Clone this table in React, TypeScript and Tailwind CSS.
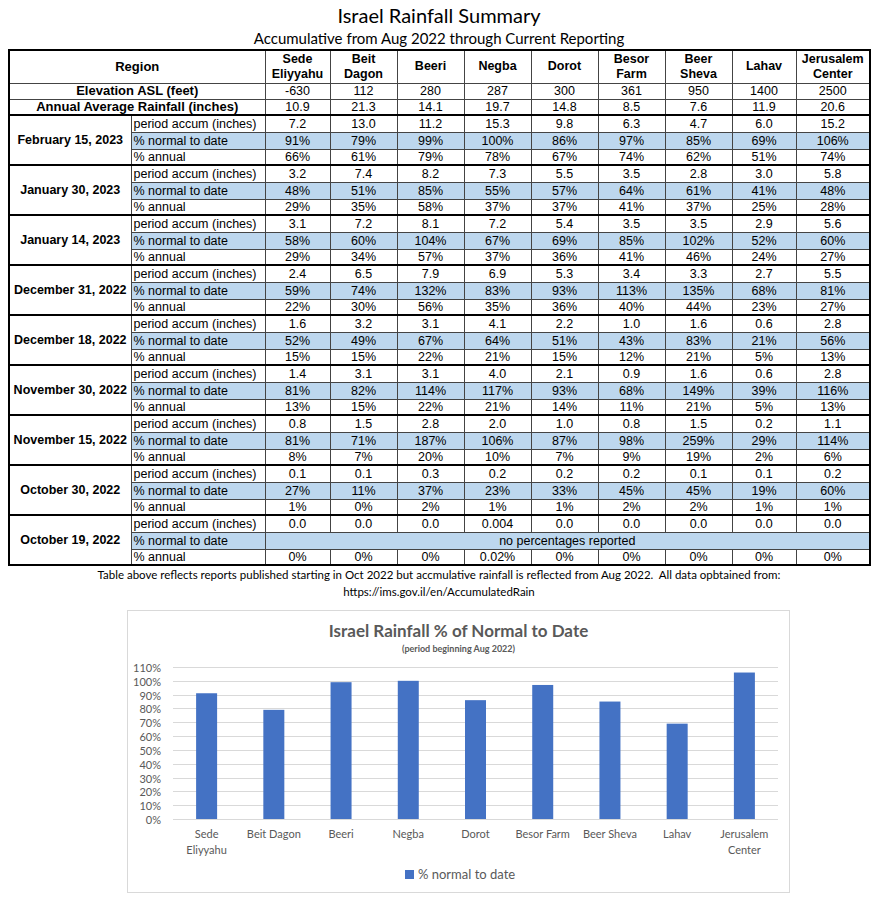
import React from 'react'

const stations = [
  ['Sede', 'Eliyyahu'],
  ['Beit', 'Dagon'],
  ['Beeri'],
  ['Negba'],
  ['Dorot'],
  ['Besor', 'Farm'],
  ['Beer', 'Sheva'],
  ['Lahav'],
  ['Jerusalem', 'Center'],
]

const elevation = ['-630', '112', '280', '287', '300', '361', '950', '1400', '2500']
const annualAvg = ['10.9', '21.3', '14.1', '19.7', '14.8', '8.5', '7.6', '11.9', '20.6']

type Report = {
  date: string
  accum: string[]
  normal: string[] | null
  annual: string[]
}

const pct = (xs: number[]) => xs.map((x) => `${x}%`)

const reports: Report[] = [
  {
    date: 'February 15, 2023',
    accum: ['7.2', '13.0', '11.2', '15.3', '9.8', '6.3', '4.7', '6.0', '15.2'],
    normal: pct([91, 79, 99, 100, 86, 97, 85, 69, 106]),
    annual: pct([66, 61, 79, 78, 67, 74, 62, 51, 74]),
  },
  {
    date: 'January 30, 2023',
    accum: ['3.2', '7.4', '8.2', '7.3', '5.5', '3.5', '2.8', '3.0', '5.8'],
    normal: pct([48, 51, 85, 55, 57, 64, 61, 41, 48]),
    annual: pct([29, 35, 58, 37, 37, 41, 37, 25, 28]),
  },
  {
    date: 'January 14, 2023',
    accum: ['3.1', '7.2', '8.1', '7.2', '5.4', '3.5', '3.5', '2.9', '5.6'],
    normal: pct([58, 60, 104, 67, 69, 85, 102, 52, 60]),
    annual: pct([29, 34, 57, 37, 36, 41, 46, 24, 27]),
  },
  {
    date: 'December 31, 2022',
    accum: ['2.4', '6.5', '7.9', '6.9', '5.3', '3.4', '3.3', '2.7', '5.5'],
    normal: pct([59, 74, 132, 83, 93, 113, 135, 68, 81]),
    annual: pct([22, 30, 56, 35, 36, 40, 44, 23, 27]),
  },
  {
    date: 'December 18, 2022',
    accum: ['1.6', '3.2', '3.1', '4.1', '2.2', '1.0', '1.6', '0.6', '2.8'],
    normal: pct([52, 49, 67, 64, 51, 43, 83, 21, 56]),
    annual: pct([15, 15, 22, 21, 15, 12, 21, 5, 13]),
  },
  {
    date: 'November 30, 2022',
    accum: ['1.4', '3.1', '3.1', '4.0', '2.1', '0.9', '1.6', '0.6', '2.8'],
    normal: pct([81, 82, 114, 117, 93, 68, 149, 39, 116]),
    annual: pct([13, 15, 22, 21, 14, 11, 21, 5, 13]),
  },
  {
    date: 'November 15, 2022',
    accum: ['0.8', '1.5', '2.8', '2.0', '1.0', '0.8', '1.5', '0.2', '1.1'],
    normal: pct([81, 71, 187, 106, 87, 98, 259, 29, 114]),
    annual: pct([8, 7, 20, 10, 7, 9, 19, 2, 6]),
  },
  {
    date: 'October 30, 2022',
    accum: ['0.1', '0.1', '0.3', '0.2', '0.2', '0.2', '0.1', '0.1', '0.2'],
    normal: pct([27, 11, 37, 23, 33, 45, 45, 19, 60]),
    annual: pct([1, 0, 2, 1, 1, 2, 2, 1, 1]),
  },
  {
    date: 'October 19, 2022',
    accum: ['0.0', '0.0', '0.0', '0.004', '0.0', '0.0', '0.0', '0.0', '0.0'],
    normal: null,
    annual: ['0%', '0%', '0%', '0.02%', '0%', '0%', '0%', '0%', '0%'],
  },
]

const chartLabels = [
  ['Sede', 'Eliyyahu'],
  ['Beit Dagon'],
  ['Beeri'],
  ['Negba'],
  ['Dorot'],
  ['Besor Farm'],
  ['Beer Sheva'],
  ['Lahav'],
  ['Jerusalem', 'Center'],
]
const chartValues = [91, 79, 99, 100, 86, 97, 85, 69, 106]

const cell = 'border border-[#444] p-0 px-[2px] text-center whitespace-nowrap overflow-hidden'
const blue = 'bg-[#bdd7ee]'
const thick = 'border-t-2 border-t-black'

function RainChart() {
  // plot area inside the svg
  const left = 45
  const right = 650
  const top = 12
  const bottom = 164
  const step = (bottom - top) / 11
  const slot = (right - left) / 9
  const ticks = Array.from({ length: 12 }, (_, i) => i * 10)

  return (
    <svg width="661" height="236" className="block" style={{ fontFamily: 'Lato, "Open Sans", sans-serif' }}>
      {ticks.map((t) => {
        const y = Math.round(bottom - (t / 10) * step) + 0.5
        return (
          <g key={t}>
            <line x1={left} x2={right} y1={y} y2={y} stroke="#d9d9d9" strokeWidth="1" />
            <text x={33} y={y + 4} textAnchor="end" fontSize="11" fill="#595959">
              {t}%
            </text>
          </g>
        )
      })}
      {chartValues.map((v, i) => {
        const cx = left + slot * i + slot / 2
        const h = (v / 10) * step
        return <rect key={i} x={cx - 10.5} y={bottom - h} width="21" height={h} fill="#4472c4" />
      })}
      {chartLabels.map((lines, i) => {
        const cx = left + slot * i + slot / 2
        return (
          <text key={i} x={cx} textAnchor="middle" fontSize="11" fill="#595959">
            {lines.map((l, j) => (
              <tspan key={j} x={cx} y={183 + j * 16}>
                {l}
              </tspan>
            ))}
          </text>
        )
      })}
      <rect x={277} y={215} width="9" height="9" fill="#4472c4" />
      <text x={290} y={224} fontSize="13" fill="#595959">
        % normal to date
      </text>
    </svg>
  )
}

export default function App() {
  return (
    <div className="w-[878px] bg-white pb-2 text-black" style={{ fontFamily: '"Liberation Sans", Arial, sans-serif' }}>
      <div style={{ fontFamily: 'Lato, "Open Sans", sans-serif' }} className="text-center">
        <div className="pt-[2px] text-[20px] leading-[26px]">Israel Rainfall Summary</div>
        <div className="text-[15px] leading-[20px]">Accumulative from Aug 2022 through Current Reporting</div>
      </div>

      <table className="ml-[8px] mt-[1px] w-[861px] table-fixed border-collapse border-2 border-black text-[12.5px] leading-[14px]">
        <colgroup>
          <col className="w-[122px]" />
          <col className="w-[134px]" />
          <col className="w-[65px]" />
          <col className="w-[67px]" />
          <col className="w-[67px]" />
          <col className="w-[67px]" />
          <col className="w-[67px]" />
          <col className="w-[67px]" />
          <col className="w-[67px]" />
          <col className="w-[64px]" />
          <col className="w-[74px]" />
        </colgroup>
        <thead>
          <tr className="h-[33px]">
            <th colSpan={2} className={`${cell} text-[13px] font-bold`}>
              Region
            </th>
            {stations.map((s) => (
              <th key={s.join(' ')} className={`${cell} text-[12.5px] leading-[15px] font-bold`}>
                {s.map((l) => (
                  <div key={l}>{l}</div>
                ))}
              </th>
            ))}
          </tr>
        </thead>
        <tbody>
          <tr className="h-[16px]">
            <td colSpan={2} className={`${cell} text-[13px] font-bold`}>
              Elevation ASL (feet)
            </td>
            {elevation.map((v, i) => (
              <td key={i} className={cell}>
                {v}
              </td>
            ))}
          </tr>
          <tr className="h-[16px]">
            <td colSpan={2} className={`${cell} text-[13px] font-bold`}>
              Annual Average Rainfall (inches)
            </td>
            {annualAvg.map((v, i) => (
              <td key={i} className={cell}>
                {v}
              </td>
            ))}
          </tr>
          {reports.map((r) => (
            <React.Fragment key={r.date}>
              <tr className="h-[17px]">
                <td rowSpan={3} className={`${cell} ${thick} px-0 text-[12.5px] font-bold`}>
                  {r.date}
                </td>
                <td className={`${cell} ${thick} text-left`}>period accum (inches)</td>
                {r.accum.map((v, i) => (
                  <td key={i} className={`${cell} ${thick}`}>
                    {v}
                  </td>
                ))}
              </tr>
              <tr className="h-[17px]">
                <td className={`${cell} ${blue} text-left`}>% normal to date</td>
                {r.normal ? (
                  r.normal.map((v, i) => (
                    <td key={i} className={`${cell} ${blue}`}>
                      {v}
                    </td>
                  ))
                ) : (
                  <td colSpan={9} className={`${cell} ${blue}`}>
                    no percentages reported
                  </td>
                )}
              </tr>
              <tr className="h-[16px]">
                <td className={`${cell} text-left`}>% annual</td>
                {r.annual.map((v, i) => (
                  <td key={i} className={cell}>
                    {v}
                  </td>
                ))}
              </tr>
            </React.Fragment>
          ))}
        </tbody>
      </table>

      <div className="text-center text-[11.5px] leading-[17px]" style={{ fontFamily: 'Lato, "Open Sans", sans-serif' }}>
        <div>
          Table above reflects reports published starting in Oct 2022 but accmulative rainfall is reflected from Aug 2022.&nbsp; All data opbtained from:
        </div>
        <div>https://ims.gov.il/en/AccumulatedRain</div>
      </div>

      <div className="ml-[127px] mt-[10px] h-[283px] w-[663px] border border-[#d9d9d9]" style={{ fontFamily: 'Lato, "Open Sans", sans-serif' }}>
        <div className="pt-[10px] text-center text-[17px] font-bold leading-[20px] text-[#595959]">
          Israel Rainfall % of Normal to Date
        </div>
        <div className="mt-[2px] text-center text-[9px] font-bold leading-[12px] text-[#595959]">
          (period beginning Aug 2022)
        </div>
        <RainChart />
      </div>
    </div>
  )
}
